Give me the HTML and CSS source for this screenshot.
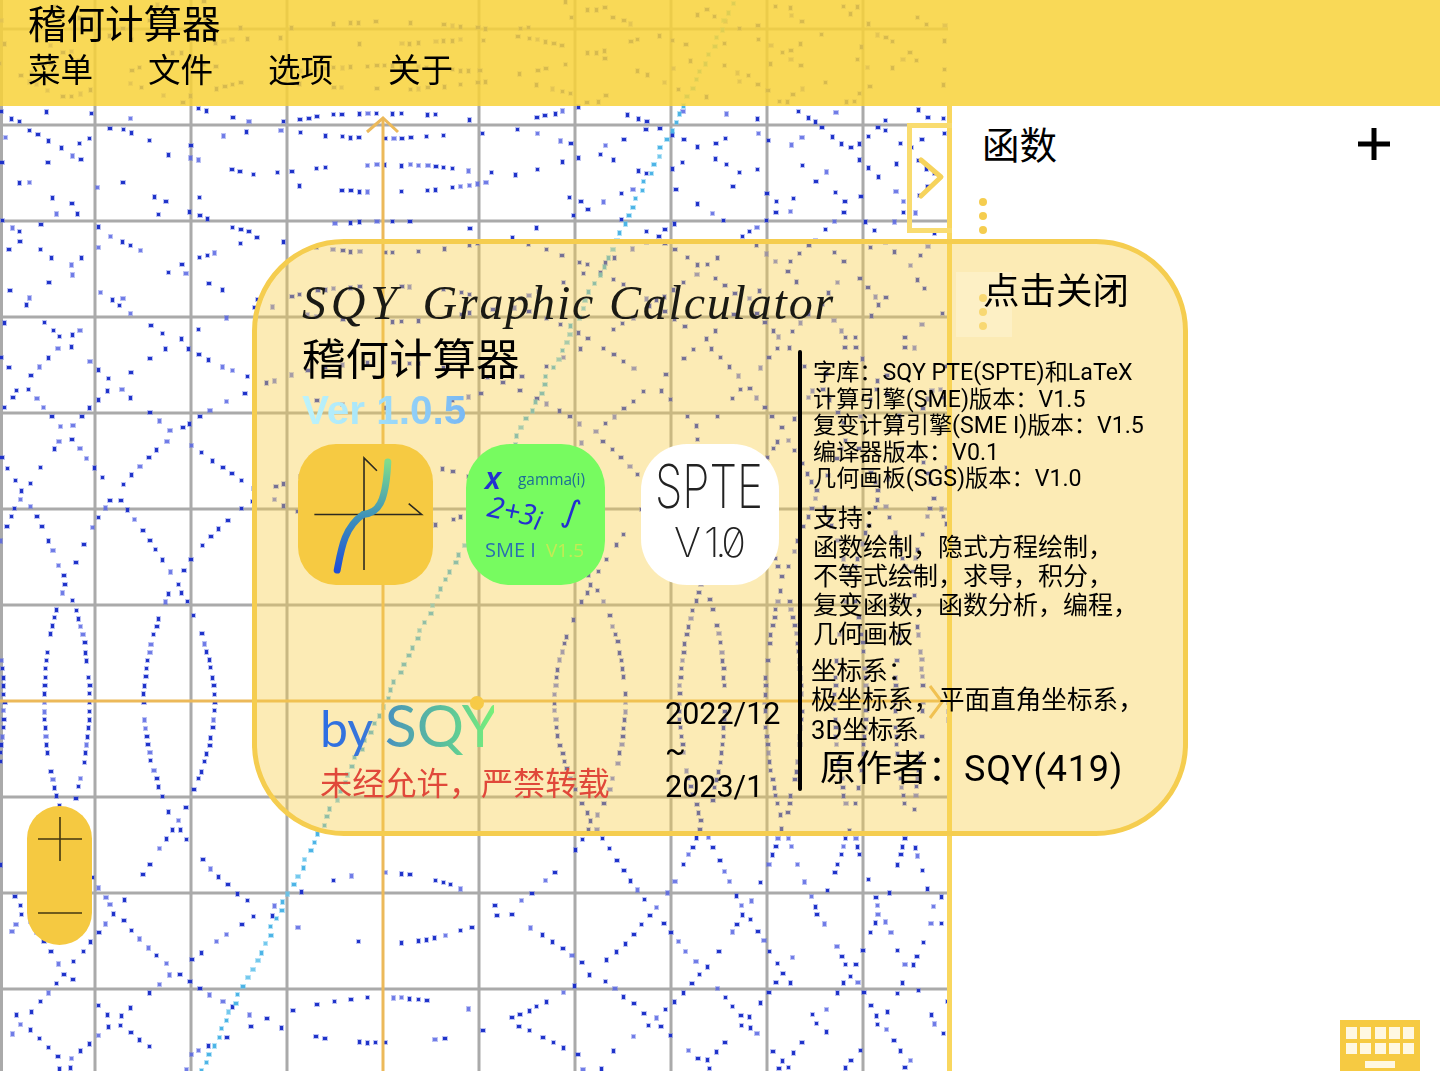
FILE: index.html
```html
<!DOCTYPE html>
<html lang="zh-CN">
<head>
<meta charset="utf-8">
<title>稽何计算器</title>
<link rel="stylesheet" href="styles.css">
</head>
<body>
<div class="app">
  <canvas id="graph" class="graph" width="950" height="1071"></canvas>

  <header class="topbar">
    <div class="app-title">稽何计算器</div>
    <nav class="menu">
      <span class="menu-item">菜单</span>
      <span class="menu-item">文件</span>
      <span class="menu-item">选项</span>
      <span class="menu-item">关于</span>
    </nav>
  </header>

  <main class="workspace">
    <div class="stage">
      <div class="zoom-pill">
        <svg class="zoom-icon" viewBox="0 0 44 44"><path d="M0 22H44M22 0V44"/></svg>
        <svg class="zoom-icon" viewBox="0 0 44 44"><path d="M0 22H44"/></svg>
      </div>
    </div>
    <aside class="sidebar">
      <button class="collapse" aria-label="收起">
        <svg class="collapse-icon" viewBox="0 0 30 46"><path d="M4 4L24 21L4 40"/></svg>
      </button>
      <div class="side-head">
        <h2 class="side-title">函数</h2>
        <svg class="add-icon" viewBox="0 0 32 32"><path d="M0 16H32M16 0V32"/></svg>
      </div>
      <div class="func-row"><span class="grip"><i></i><i></i><i></i></span></div>
      <div class="func-row"><span class="grip"><i></i><i></i><i></i></span></div>
      <div class="keyboard">
        <div class="keys">
          <i></i><i></i><i></i><i></i><i></i>
          <i></i><i></i><i></i><i></i><i></i>
        </div>
        <div class="spacebar"></div>
      </div>
    </aside>
  </main>

  <section class="about">
    <div class="close-glow"></div>
    <div class="close-label">点击关闭</div>

    <div class="about-left">
      <div class="about-en"><span class="en-sqy">SQY</span> Graphic <span class="en-calc">Calculator</span></div>
      <div class="about-cn">稽何计算器</div>
      <div class="about-ver">Ver 1.0.5</div>

      <div class="logos">
        <svg class="logo logo-graph" viewBox="0 0 135 142">
          <defs>
            <linearGradient id="curve" x1="0" y1="1" x2="0" y2="0">
              <stop offset="0" stop-color="#1f50d8"/>
              <stop offset=".5" stop-color="#3f93b8"/>
              <stop offset="1" stop-color="#7fdc8c"/>
            </linearGradient>
          </defs>
          <path class="axis-line" d="M16 71H124L111 60M66 127V14L79 27"/>
          <path class="curve-line" d="M39 127C43 106 46 84 65 71C80 70 88 60 90 18" stroke="url(#curve)"/>
        </svg>

        <svg class="logo logo-sme" viewBox="0 0 139 141">
          <text class="sme-mark" x="19" y="45">x</text>
          <text class="sme-gamma" x="52" y="41">gamma(i)</text>
          <text class="sme-num" x="20" y="72" transform="rotate(12 20 72)">2+3<tspan class="sme-i" dy="3">i</tspan></text>
          <text class="sme-int" x="97" y="78" transform="rotate(16 104 68)">∫</text>
          <text class="sme-name" x="19" y="113">SME I</text>
          <text class="sme-v" x="80" y="113">V1.5</text>
        </svg>

        <svg class="logo logo-spte" viewBox="0 0 138 141">
          <text class="spte-top" x="14" y="64" textLength="108" lengthAdjust="spacingAndGlyphs">SPTE</text>
          <text class="spte-bot" x="33" y="113" textLength="72" lengthAdjust="spacing">V 1.0</text>
        </svg>
      </div>

      <div class="credits">
        <div class="author-block">
          <div class="by"><span class="by-word">by</span> <span class="by-name">SQY</span></div>
          <div class="warn">未经允许，严禁转载</div>
        </div>
        <div class="dates">
          <div>2022/12</div>
          <div>~</div>
          <div>2023/1</div>
        </div>
      </div>
    </div>

    <div class="divider"></div>

    <div class="about-right">
      <div class="info versions">
        <div>字库：SQY PTE(SPTE)和LaTeX</div>
        <div>计算引擎(SME)版本：V1.5</div>
        <div>复变计算引擎(SME I)版本：V1.5</div>
        <div>编译器版本：V0.1</div>
        <div>几何画板(SGS)版本：V1.0</div>
      </div>
      <div class="info support">
        <div>支持：</div>
        <div>函数绘制，隐式方程绘制，</div>
        <div>不等式绘制，求导，积分，</div>
        <div>复变函数，函数分析，编程，</div>
        <div>几何画板</div>
      </div>
      <div class="info coords">
        <div>坐标系：</div>
        <div>极坐标系，平面直角坐标系，</div>
        <div>3D坐标系</div>
      </div>
      <div class="creator">原作者：<span class="creator-name">SQY(419)</span></div>
    </div>

    <div class="origin-pin"></div>
  </section>
</div>
<script src="app.js"></script>
</body>
</html>
```

FILE: styles.css
```css
* { box-sizing: border-box; }
html, body { margin: 0; padding: 0; height: 100%; background: #fff; }
body {
  font-family: "Roboto", "Noto Sans CJK SC", sans-serif;
  color: #000;
  overflow: hidden;
}
.app {
  position: relative;
  width: 1440px;
  height: 1071px;
  display: flex;
  flex-direction: column;
  overflow: hidden;
}
.graph { position: absolute; left: 0; top: 0; display: block; }

.topbar {
  position: relative;
  height: 106px;
  flex: none;
  padding: 0 0 0 28px;
  background: rgba(248, 210, 57, .85);
}
.app-title { font-size: 38.5px; line-height: 50px; }
.menu { display: flex; }
.menu-item { width: 120px; font-size: 32.6px; line-height: 42px; }

.workspace { position: relative; flex: 1; display: flex; min-height: 0; }
.stage { position: relative; width: 947px; flex: none; }
.zoom-pill {
  position: absolute;
  left: 27px;
  top: 700px;
  width: 65px;
  height: 139px;
  border-radius: 33px;
  background: #f5c941;
  display: flex;
  flex-direction: column;
  align-items: center;
  padding: 11px 0 10px;
  justify-content: space-between;
}
.zoom-icon { width: 44px; height: 44px; display: block; }
.zoom-icon path { stroke: #43360f; stroke-width: 1.6; fill: none; }

.sidebar {
  position: relative;
  flex: 1;
  background: #fff;
  border-left: 5px solid #f9d75f;
  padding-left: 27px;
}
.collapse {
  position: absolute;
  left: -45px;
  top: 17px;
  width: 45px;
  height: 110px;
  padding: 0;
  background: none;
  border: 5px solid #f9dc70;
  border-right: 0;
}
.collapse-icon { position: absolute; left: 5px; top: 28px; width: 30px; height: 46px; }
.collapse-icon path { stroke: #f6d35c; stroke-width: 5; fill: none; stroke-linecap: round; stroke-linejoin: round; }
.side-head { height: 92px; display: flex; justify-content: space-between; align-items: flex-start; padding-top: 15px; padding-right: 50px; }
.side-title { margin: 0 0 0 3px; font-size: 37.5px; font-weight: 400; line-height: 50px; }
.add-icon { width: 32px; height: 32px; margin-top: 7px; }
.add-icon path { stroke: #000; stroke-width: 5; fill: none; }
.func-row { height: 96px; }
.grip { display: flex; flex-direction: column; gap: 6px; width: 8px; }
.grip i { width: 8px; height: 8px; border-radius: 50%; background: #f5cd4f; }
.keyboard {
  position: absolute;
  right: 20px;
  bottom: 0;
  width: 80px;
  height: 51px;
  background: #f6ca42;
  padding: 7px 6px 0;
}
.keys { display: grid; grid-template-columns: repeat(5, 11px); gap: 4px 3.3px; }
.keys i { height: 11.5px; background: #fff8e2; }
.spacebar { width: 30px; height: 7px; margin: 7px auto 0; background: #fff8e2; }

.about {
  position: absolute;
  left: 252px;
  top: 239px;
  width: 936px;
  height: 597px;
  border: 5px solid #f5cd4f;
  border-radius: 92px;
  background: rgba(248, 205, 70, .4);
  display: flex;
  padding-left: 45px;
}
.close-glow {
  position: absolute;
  left: 699px;
  top: 28px;
  width: 56px;
  height: 65px;
  background: rgba(255, 255, 255, .22);
}
.close-label {
  position: absolute;
  left: 726px;
  top: 23px;
  font-size: 36.5px;
  line-height: 50px;
}
.about-left { width: 496px; flex: none; padding-top: 33px; }
.about-en {
  font-family: "Liberation Serif", serif;
  font-style: italic;
  font-size: 48px;
  line-height: 52px;
  letter-spacing: 1.8px;
  word-spacing: 7px;
  white-space: nowrap;
  color: #1a1a14;
}
.en-sqy { letter-spacing: 4.8px; }
.en-calc { margin-left: -7px; }
.about-cn { font-size: 43.5px; line-height: 56px; margin-top: 4px; }
.about-ver {
  font-family: "Liberation Sans", sans-serif;
  font-weight: 700;
  font-size: 40.5px;
  line-height: 42px;
  width: 168px;
  background: linear-gradient(90deg, #bdf3fb 0%, #a9e6fa 35%, #76b6f4 100%);
  -webkit-background-clip: text;
  background-clip: text;
  color: transparent;
}
.logos { display: flex; margin: 13px 0 0 -4px; }
.logo { display: block; height: 141px; flex: none; }
.logo-graph { width: 135px; background: #f6ca42; border-radius: 38px; }
.logo-sme { width: 139px; margin-left: 33px; background: #77fb60; border-radius: 44px; }
.logo-spte { width: 138px; margin-left: 36px; background: #fff; border-radius: 46px; }
.axis-line { fill: none; stroke: #2c2a20; stroke-width: 1.6; }
.curve-line { fill: none; stroke-width: 7; stroke-linecap: round; }
.sme-mark { font-family: "Noto Sans", sans-serif; font-style: italic; font-weight: 600; font-size: 31px; fill: #2330d0; }
.sme-gamma { font-family: "Open Sans", sans-serif; font-size: 15.4px; fill: #1c6d96; }
.sme-num { font-family: "Noto Sans", sans-serif; font-style: italic; font-size: 29px; fill: #2330d0; }
.sme-i { font-size: 26px; }
.sme-int { font-family: "DejaVu Sans", sans-serif; font-style: italic; font-size: 32px; fill: #2330d0; }
.sme-name { font-family: "Open Sans", sans-serif; font-size: 20px; fill: #2a6fb0; }
.sme-v { font-family: "Open Sans", sans-serif; font-size: 19px; fill: #c4ea54; }
.spte-top { font-family: "Inter", sans-serif; font-weight: 200; font-size: 60px; fill: #222; }
.spte-bot { font-family: "Inter", sans-serif; font-weight: 200; font-size: 41px; fill: #222; font-feature-settings: "zero"; }

.credits { display: flex; margin-top: 105px; padding-left: 18px; }
.author-block { width: 346px; flex: none; }
.by {
  font-family: "Lato", sans-serif;
  font-weight: 400;
  line-height: 70px;
  height: 70px;
  width: 174px;
  font-size: 50px;
  white-space: nowrap;
  background: linear-gradient(90deg, #2c6de4 0%, #3a78d8 28%, #4f9fb2 46%, #5cc49a 74%, #78f07a 100%);
  -webkit-background-clip: text;
  background-clip: text;
  color: transparent;
}
.by-name { font-size: 59px; }
.warn { font-size: 32.2px; line-height: 42px; color: #e0483a; white-space: nowrap; margin-top: 3px; }
.dates { font-size: 30.5px; line-height: 36.5px; white-space: nowrap; padding-top: 6px; margin-left: -1px; }

.divider {
  width: 4px;
  height: 441px;
  margin-top: 106px;
  flex: none;
  border-radius: 2px;
  background: #000;
}
.about-right { padding: 115px 0 0 11px; white-space: nowrap; flex: none; width: 380px; }
.info { font-size: 25px; }
.versions { font-size: 23.2px; line-height: 26.6px; }
.support { line-height: 29px; margin-top: 12px; }
.coords { font-size: 25.6px; line-height: 29.5px; margin-top: 8px; margin-left: -2px; }
.creator { font-size: 36px; line-height: 46px; margin: 1px 0 0 7px; }
.creator-name { letter-spacing: .8px; }
.origin-pin {
  position: absolute;
  left: 213px;
  top: 452px;
  width: 14px;
  height: 14px;
  border-radius: 50%;
  background: #f7ca47;
}
```

FILE: app.js
```javascript
(function () {
  var c = document.getElementById('graph');
  var g = c.getContext('2d');
  var H = c.height;
  var OX = 383, OY = 701, UNIT = 96, STEP = 8.47;

  // grid
  g.fillStyle = '#aaaaaa';
  g.fillRect(0, 0, 3, H);
  var k;
  for (k = -3; k <= 5; k++) {
    if (k !== 0) g.fillRect(OX + k * UNIT - 1.5, 0, 3, H);
  }
  for (k = -7; k <= 3; k++) {
    if (k !== 0) g.fillRect(0, OY + k * UNIT - 1.5, 948, 3);
  }

  function hash(i, j) {
    var h = (i * 73856093) ^ (j * 19349663);
    h = (h ^ (h >>> 13)) * 1274126177;
    return Math.abs(h ^ (h >>> 16)) % 1000;
  }

  function dot(x, y, seed, blue) {
    var px = Math.round(x), py = Math.round(y);
    var kind = seed % 4;
    var w = seed % 3 === 0 ? 4 : 3, h = seed % 3 === 1 ? 4 : 3;
    var core = blue ? 'rgba(24,44,200,.95)' : 'rgba(72,178,230,.95)';
    var halo = blue ? 'rgba(90,105,228,.4)' : 'rgba(110,200,240,.5)';
    var mid = blue ? 'rgba(85,100,225,.75)' : 'rgba(100,195,235,.8)';
    g.fillStyle = halo;
    g.fillRect(px - 1, py - 1, w + 2, h + 2);
    g.fillStyle = kind === 0 ? mid : core;
    g.fillRect(px, py, w, h);
  }

  function fn(a, b) { return Math.sin(a * a) + Math.sin(b * b); }

  // implicit curve sin(x^2) + sin(y^2) = 0: zero crossings on a coarse lattice,
  // thinned to one sample per lattice-sized neighbourhood
  var pts = [];
  var i, j;
  for (j = -84; j <= 44; j++) {
    for (i = -46; i <= 66; i++) {
      var x = OX + (i + 0.5) * STEP, y = OY + (j + 0.5) * STEP;
      if (x > 947 || x < -3 || y < -3 || y > H + 3) continue;
      var a = (x - OX) / UNIT, b = (y - OY) / UNIT, s = STEP / UNIT;
      var f0 = fn(a, b);
      var f1 = fn(a + s, b), f2 = fn(a, b + s), f3 = fn(a + s, b + s);
      if ((f0 > 0) === (f1 > 0) && (f0 > 0) === (f2 > 0) && (f0 > 0) === (f3 > 0)) continue;
      var ca = a + s / 2, cb = b + s / 2;
      var fc = fn(ca, cb);
      var ga = 2 * ca * Math.cos(ca * ca), gb = 2 * cb * Math.cos(cb * cb);
      var g2 = ga * ga + gb * gb;
      if (g2 < 0.5) continue;
      var na = ca - fc * ga / g2, nb = cb - fc * gb / g2;
      if (Math.abs(na - ca) > s || Math.abs(nb - cb) > s) continue;
      pts.push({
        x: OX + na * UNIT, y: OY + nb * UNIT, i: i, j: j,
        g: Math.sqrt(g2), flat: Math.abs(gb) > 2 * Math.abs(ga)
      });
    }
  }

  var kept = [];
  pts.forEach(function (p) {
    for (var q = kept.length - 1; q >= 0 && q > kept.length - 260; q--) {
      var dx = kept[q].x - p.x, dy = kept[q].y - p.y;
      if (dx * dx + dy * dy < 62) return;
    }
    kept.push(p);
  });

  kept.forEach(function (p) {
    var sd = hash(p.i, p.j);
    var drop = Math.min(0.4, Math.max(0.04, (p.g - 6) / 11));
    if (p.flat) drop = 0.55;
    if (sd / 1000 < drop) return;
    dot(p.x, p.y, sd, true);
  });

  // y = 2x
  for (j = -84; j <= 44; j++) {
    var yy = OY + (j + 0.5) * STEP;
    var xx = OX - (yy - OY) / 2;
    var jit = (hash(j, 7) % 5) - 2;
    dot(xx + jit, yy, hash(j, 3), false);
  }

  // axes
  g.fillStyle = '#ecb95a';
  g.fillRect(OX - 1.5, 118, 3, H);
  g.fillRect(0, OY - 1.5, 943, 3);
  g.strokeStyle = '#ecb95a';
  g.lineWidth = 3;
  g.beginPath();
  g.moveTo(367, 132); g.lineTo(383, 118); g.lineTo(398, 132);
  g.stroke();
  g.beginPath();
  g.moveTo(930, 686); g.lineTo(942, 702); g.lineTo(930, 718);
  g.stroke();
})();
```
